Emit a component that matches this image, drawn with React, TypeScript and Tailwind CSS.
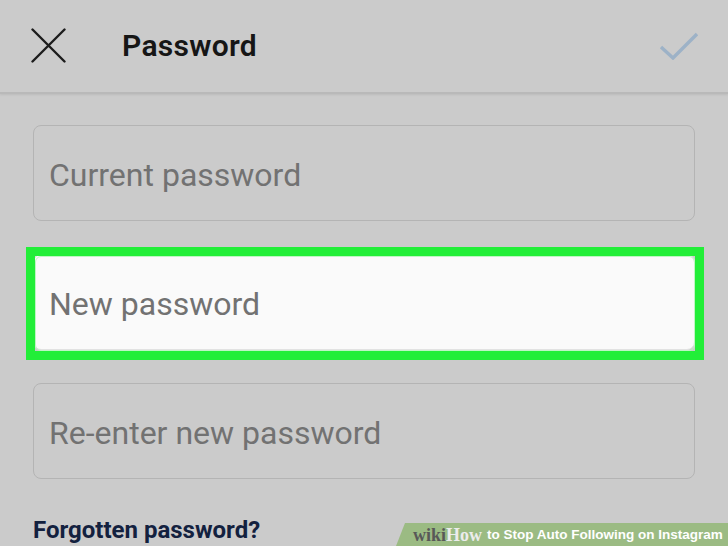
import React from 'react'

const fields = ['Current password', 'New password', 'Re-enter new password']

const Field: React.FC<{ label: string; active?: boolean }> = ({ label, active }) => (
  <div
    className={`relative h-[96px] rounded-[8px] border flex items-center px-[15px] ${
      active ? 'bg-[#fafafa] border-[#e2e2e2]' : 'bg-[#cbcbcb] border-[#b4b4b4]'
    }`}
  >
    <span className="text-[32px] text-[#727272] leading-none mt-[3px]">{label}</span>
    {active && (
      <div className="absolute left-[-8px] right-[-10px] top-[-8px] bottom-[-11px] border-[9px] border-[#22ee38] pointer-events-none">
        <div className="w-full h-full border border-[#bff5c4] rounded-[6px]" />
      </div>
    )}
  </div>
)

const App: React.FC = () => {
  return (
    <div
      className="w-[728px] h-[546px] bg-[#cbcbcb] overflow-hidden flex flex-col"
      style={{ fontFamily: 'Roboto, "Liberation Sans", sans-serif' }}
    >
      {/* top bar */}
      <header className="h-[94px] shrink-0 flex items-center border-b-2 border-[#b9b9b9] shadow-[0_1px_2px_rgba(0,0,0,0.08)]">
        <div className="w-[122px] pl-[31px] shrink-0">
          <svg width="35" height="35" viewBox="0 0 35 35" className="mt-[-2px]">
            <path d="M1.5 1.5 L33.5 33.5 M33.5 1.5 L1.5 33.5" stroke="#1c1c1c" strokeWidth="2.4" strokeLinecap="round" />
          </svg>
        </div>
        <h1 className="text-[30px] font-semibold text-[#161616] tracking-[0.3px] flex-1 mt-[-2px]">Password</h1>
        <svg width="40" height="30" viewBox="0 0 40 30" className="mr-[29px] mt-[-2px]">
          <path d="M2 17 L14 28 L38 4" fill="none" stroke="#9db2c7" strokeWidth="3.4" />
        </svg>
      </header>

      {/* form */}
      <div className="flex flex-col gap-[33px] pl-[33px] pr-[33px] pt-[31px]">
        {fields.map(f => (
          <Field key={f} label={f} active={f === 'New password'} />
        ))}
      </div>

      <div className="relative flex-1">
        <p className="absolute left-[33px] top-[39px] text-[24px] font-bold text-[#13213f] leading-none">
          Forgotten password?
        </p>
        {/* wikiHow watermark */}
        <div className="absolute right-0 bottom-0 w-[332px] h-[23px] bg-[#9bbb83] [clip-path:polygon(9px_0,100%_0,100%_100%,0_100%)] flex items-center pl-[17px]">
          <span className="text-[18px] font-bold text-[#585858] leading-none" style={{ fontFamily: '"Liberation Serif", serif' }}>
            wiki
          </span>
          <span className="text-[18px] font-bold text-[#ececec] leading-none mr-[5px]" style={{ fontFamily: '"Liberation Serif", serif' }}>
            How
          </span>
          <span className="text-[13.5px] font-bold text-white leading-none" style={{ fontFamily: '"Liberation Sans", sans-serif' }}>
            to Stop Auto Following on Instagram
          </span>
        </div>
      </div>
    </div>
  )
}

export default App
